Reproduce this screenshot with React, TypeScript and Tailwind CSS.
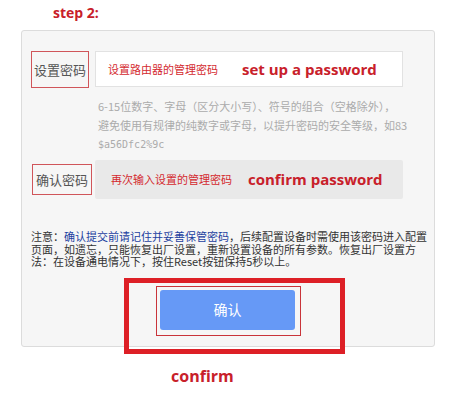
import React from "react";

const cjk = { fontFamily: '"Noto Sans CJK SC", "Noto Sans", sans-serif' };
const latin = { fontFamily: '"Open Sans", "Noto Sans CJK SC", sans-serif' };

export default function App() {
  return (
    <div className="w-[467px] h-[405px] bg-white overflow-hidden relative">
      <div className="pl-[53px] pt-[5px] h-[30px] text-[14px] leading-[16px] font-bold text-[#c8202a]" style={latin}>
        step 2:
      </div>
      <div className="ml-[21px] w-[414px] h-[317px] border border-[#dcdcdc] bg-[#f6f6f6] rounded-[3px] pt-[20px] pl-[9px]" style={cjk}>
        {/* row 1 */}
        <div className="flex items-start">
          <div className="w-[58px] h-[37px] border border-[#d0555a] flex items-center justify-center text-[13px] text-[#555] whitespace-nowrap">
            设置密码
          </div>
          <div className="ml-[6px] w-[308px] h-[36px] bg-white border border-[#e2e2e2] flex items-center pl-[12px]">
            <span className="text-[11px] text-[#d42a2f] whitespace-nowrap">设置路由器的管理密码</span>
            <span className="ml-[24px] text-[15px] font-bold text-[#c8202a] whitespace-nowrap" style={latin}>set up a password</span>
          </div>
        </div>
        {/* hint */}
        <div className="ml-[67px] mt-[9px] text-[11px] leading-[19px] text-[#ababab] whitespace-nowrap">
          <div>6-15位数字、字母（区分大小写）、符号的组合（空格除外），</div>
          <div>避免使用有规律的纯数字或字母，以提升密码的安全等级，如83</div>
          <div className="text-[10px]" style={{ fontFamily: '"DejaVu Sans Mono", monospace' }}>$a56Dfc2%9c</div>
        </div>
        {/* row 2 */}
        <div className="flex items-center mt-[6px]">
          <div className="ml-[1px] w-[60px] h-[31px] border border-[#d0555a] flex items-center justify-center text-[13px] text-[#555] whitespace-nowrap">
            确认密码
          </div>
          <div className="ml-[3px] w-[308px] h-[39px] bg-[#e9e9e9] rounded-[2px] flex items-center pl-[16px]">
            <span className="text-[11px] text-[#d42a2f] whitespace-nowrap">再次输入设置的管理密码</span>
            <span className="ml-[16px] text-[15px] font-bold text-[#c8202a] whitespace-nowrap" style={latin}>confirm password</span>
          </div>
        </div>
        {/* notice */}
        <div className="mt-[31px] text-[11px] leading-[12.5px] text-[#333] whitespace-nowrap">
          <div>
            注意：<span className="text-[#1c3fa0]">确认提交前请记住并妥善保管密码</span>，后续配置设备时需使用该密码进入配置
          </div>
          <div>页面，如遗忘，只能恢复出厂设置，重新设置设备的所有参数。恢复出厂设置方</div>
          <div>法：在设备通电情况下，按住Reset按钮保持5秒以上。</div>
        </div>
        {/* confirm button area */}
        <div className="relative ml-[93px] mt-[10px] w-[221px] h-[76px] border-[5px] border-[#dd1f26] pl-[27px] pt-[3px]">
          <div className="w-[145px] h-[50px] border border-[#c9343a] pl-[3px] pt-[3px]">
            <div className="w-[135px] h-[40px] bg-[#6699f6] rounded-[3px] flex items-center justify-center text-white text-[14px]">
              确认
            </div>
          </div>
        </div>
      </div>
      <div className="pl-[171px] pt-[19px] text-[16px] leading-[20px] font-bold text-[#c8202a]" style={latin}>
        confirm
      </div>
    </div>
  );
}
